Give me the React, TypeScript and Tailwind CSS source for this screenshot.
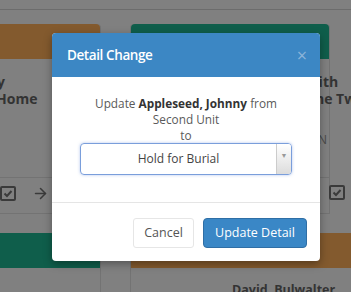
import React from "react";
import { ArrowRight } from "lucide-react";

const font = { fontFamily: '"Open Sans", "Liberation Sans", sans-serif' };

function CheckBoxIcon() {
  return (
    <svg width="16" height="15" viewBox="0 0 16 15" fill="none">
      <rect x="1" y="1" width="14" height="13" rx="1" stroke="#3a3a3a" strokeWidth="2" />
      <path d="M4.5 7.5 L7 10 L11.5 5" stroke="#3a3a3a" strokeWidth="2" fill="none" />
    </svg>
  );
}

function Card({
  head,
  line1,
  line2,
  line3,
  pl,
  l1,
  icons,
}: {
  head: string;
  line1: string;
  line2: string;
  line3?: string;
  pl: string;
  l1: string;
  icons: "left" | "right";
}) {
  return (
    <div className="w-[200px] shrink-0 border-x border-b border-[#737373] rounded-t-[4px]">
      <div className={`h-[35px] rounded-t-[4px] ${head}`} />
      <div className={`h-[118px] ${pl} pt-[14px] text-[14px] font-bold leading-[17px] text-[#333333]`}>
        <div className={`whitespace-nowrap ${l1}`}>{line1}</div>
        <div className="whitespace-nowrap">{line2}</div>
        {line3 && (
          <div className="whitespace-nowrap text-right pr-[2px] mt-[24px] font-normal text-[12px] text-[#4a4a4a]">
            {line3}
          </div>
        )}
      </div>
      <div className="h-[36px] border-t border-[#737373] flex items-start pt-[7px]">
        {icons === "left" ? (
          <div className="flex items-center gap-[16px] pl-[98px]">
            <CheckBoxIcon />
            <ArrowRight size={17} strokeWidth={2.2} color="#3a3a3a" />
          </div>
        ) : (
          <div className="pl-[198px]">
            <CheckBoxIcon />
          </div>
        )}
      </div>
    </div>
  );
}

export default function App() {
  return (
    <div className="relative w-[351px] h-[292px] overflow-hidden bg-[#808080]" style={font}>
      <div className="h-[10px] border-b border-[#6c6c6c]" />
      <div className="flex gap-[29px] ml-[-99px] mt-[14px]">
        <Card
          head="bg-[#835a2e]"
          line1="Kennedy"
          line2="Funeral Home"
          pl="pl-[37px]"
          l1="ml-[5px]"
          icons="left"
        />
        <Card
          head="bg-[#0f5e4b]"
          line1="Kenneth Smith"
          line2="Funeral Home Two"
          line3="WASHINGTON"
          pl="pl-[103px]"
          l1=""
          icons="right"
        />
      </div>
      <div className="flex gap-[29px] ml-[-99px] mt-[19px]">
        <div className="w-[200px] shrink-0 border-x border-[#737373] rounded-t-[4px]">
          <div className="h-[35px] rounded-t-[4px] bg-[#0f5e4b]" />
          <div className="h-[40px]" />
        </div>
        <div className="w-[240px] shrink-0 border-x border-[#737373] rounded-t-[4px]">
          <div className="h-[35px] rounded-t-[4px] bg-[#835a2e]" />
          <div className="pt-[13px] pl-[101px] text-[12.5px] font-bold text-[#333333] whitespace-nowrap">
            David&nbsp; Bulwalter
          </div>
        </div>
      </div>

      <div className="absolute left-[52px] top-[33px] w-[268px] bg-white rounded-[4px] shadow-[0_3px_9px_rgba(0,0,0,0.35)] overflow-hidden">
        <div className="h-[44px] bg-[#3c87c4] flex items-center justify-between pl-[15px] pr-[13px]">
          <span className="text-white text-[13.5px] font-semibold tracking-[-0.4px]">Detail Change</span>
          <span className="text-[#8bb4d9] text-[18px] leading-none">×</span>
        </div>
        <div className="pt-[18px] pb-[27px] px-[28px] text-center text-[11.8px] leading-[16px] text-[#5a5a5a]">
          <div>
            Update <b className="font-bold text-[#333333]">Appleseed, Johnny</b> from
          </div>
          <div>Second Unit</div>
          <div>to</div>
          <div className="h-[32px] flex border border-[#7a9edb] rounded-[4px] shadow-[0_0_3px_rgba(100,140,220,0.5)] overflow-hidden">
            <div className="flex-1 flex items-center justify-center text-[12px] text-[#444444]">Hold for Burial</div>
            <div className="w-[15px] border-l border-[#cccccc] bg-gradient-to-b from-[#ffffff] to-[#dcdcdc] flex items-start justify-center pt-[8px]">
              <span className="text-[#999999] text-[7px] leading-none">▼</span>
            </div>
          </div>
        </div>
        <div className="border-t border-[#e5e5e5] flex justify-end gap-[9px] pt-[15px] pb-[13px] pr-[13px]">
          <button className="w-[61px] h-[30px] border border-[#e6e6e6] rounded-[3px] bg-white text-[12.5px] text-[#555555]">
            Cancel
          </button>
          <button className="w-[104px] h-[30px] border border-[#2f6ea5] rounded-[4px] bg-[#3a87c6] text-[12.5px] text-white">
            Update Detail
          </button>
        </div>
      </div>
    </div>
  );
}
